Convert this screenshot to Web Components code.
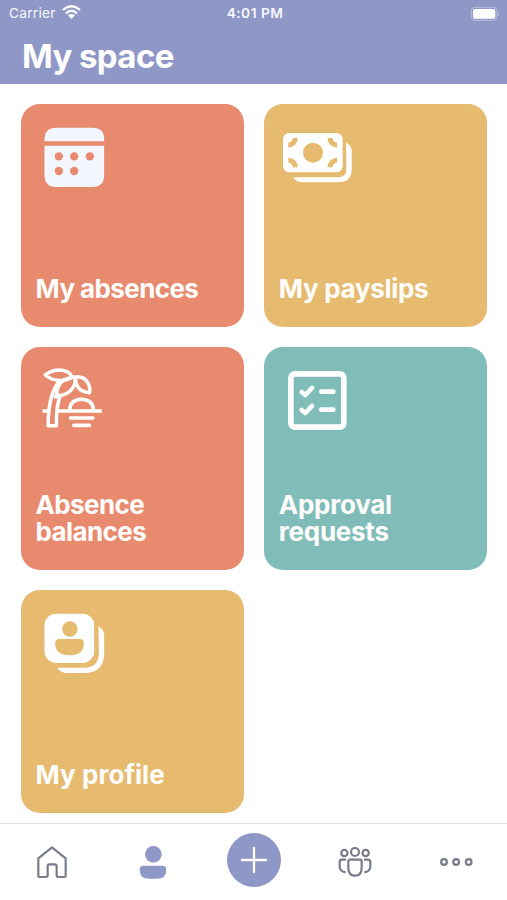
<!DOCTYPE html>
<html lang="en"><head><meta charset="utf-8"><title>My space</title>
<style>html,body{margin:0;height:100%;background:#fff}</style></head>
<body>
<my-space-app></my-space-app>
<script>
const ICONS = {
  calendar: ['47.5 36 225 210', '<g fill="#f3f6ff"><path d="M73 94V88Q73 53 108 53H217Q252 53 252 88V94Z"/><path d="M73 107H252V196Q252 231 217 231H108Q73 231 73 196Z"/></g><g fill="#e88a6d"><circle cx="116" cy="139" r="12.5"/><circle cx="162" cy="139" r="12.5"/><circle cx="209" cy="139" r="12.5"/><circle cx="116" cy="183" r="12.5"/><circle cx="162" cy="183" r="12.5"/></g>'],
  cash: ['45 35 225 210', '<path fill="#fff" d="M246 97Q263 104 263 123V176Q263 216 223 216H116Q96 216 88 201H223Q247 201 247 176Z"/><rect x="57" y="68" width="179" height="118" rx="19" fill="#fff"/><circle cx="147" cy="127" r="30" fill="#e6bb70"/><path d="M94 83A21 21 0 0 1 73 104M198 83A21 21 0 0 0 219 104M94 171A21 21 0 0 0 73 150M198 171A21 21 0 0 1 219 150" fill="none" stroke="#e6bb70" stroke-width="15"/>'],
  palm: ['46.5 45 225 210', '<g fill="none" stroke="#fff" stroke-width="10.500" stroke-linejoin="round"><path d="M74 75Q94 60 117 60Q147 61 155 82Q137 93 113 91Q91 89 74 75Z"/><path d="M155 82Q123 89 115 107Q107 121 109 137Q144 136 158 112Q168 97 162 82"/><path d="M155 82Q188 75 201 97Q210 110 207 128Q184 126 173 112Q163 99 165 84"/><path d="M116 94Q82 137 83 227H108Q106 174 119 136M100 140L114 140"/><path d="M66 183H90M108 183H244M147 181Q149 149 183 148Q218 149 219 181"/></g><path d="M150 204H217M160 226H207" stroke="#fff" stroke-width="11" stroke-linecap="round"/>'],
  checklist: ['45 45 225 210', '<g fill="none" stroke="#fff" stroke-linecap="round" stroke-linejoin="round"><rect x="80.500" y="71.500" width="159" height="160" rx="13" stroke-width="17"/><path stroke-width="14" d="M113 126L124 135L144 114M113 180L124 189L144 168"/><path stroke-width="14" d="M172 125H208M172 179H208"/></g>'],
  profile: ['47.5 36 225 210', '<path fill="#fff" d="M235 91Q252 99 252 122V171Q252 231 192 231H143Q121 231 111 215H192Q236 215 236 171Z"/><rect x="73" y="53" width="149" height="148" rx="35" fill="#fff"/><g fill="#e6bb70"><circle cx="149" cy="99" r="23"/><path d="M119 129H178Q191 129 191 142Q191 178 149 178Q105 178 105 142Q105 129 119 129Z"/></g>'],
  home: ['100 82 108 120', '<path fill="none" stroke="#777b89" stroke-width="6.500" stroke-linejoin="round" d="M154 98L195 131V183Q195 187 191 187H173Q168 187 168 182V155Q168 149 162 149H147Q141 149 141 155V182Q141 187 136 187H118Q113 187 113 183V131Z"/>'],
  person: ['404 82 108 120', '<g fill="#8f97c6"><circle cx="459" cy="119" r="25"/><path d="M430 153H487Q498 153 498 165Q498 192 469 192H447Q418 192 418 165Q418 153 430 153Z"/></g>'],
  team: ['249 82 108 120', '<g fill="none" stroke="#777b89" stroke-width="6.500"><circle cx="303" cy="112" r="12"/><circle cx="271" cy="115" r="9.500"/><circle cx="335" cy="115" r="9.500"/><path d="M288 135H318Q323 135 323 140V161Q322 183 303 183Q284 183 283 161V140Q283 135 288 135Z"/><path d="M276 135H264Q257 135 257 142V155Q257 171 275 173M330 135H341Q349 135 349 142V155Q349 171 331 173"/></g>'],
  more: ['553 82 108 120', '<g fill="none" stroke="#777b89" stroke-width="6.500"><circle cx="571" cy="142" r="8.500"/><circle cx="607.500" cy="142" r="8.500"/><circle cx="645" cy="142" r="8.500"/></g>']
};
function define(name, html) {
  const t = document.createElement('template');
  t.innerHTML = html;
  customElements.define(name, class extends HTMLElement {
    constructor() { super(); this.attachShadow({mode: 'open'}).append(t.content.cloneNode(true)); }
  });
}
customElements.define('app-icon', class extends HTMLElement {
  connectedCallback() {
    if (this.shadowRoot) return;
    const [box, body] = ICONS[this.getAttribute('name')];
    const size = box.split(' ').slice(2).map(n => n / 3);
    this.attachShadow({mode: 'open'}).innerHTML = `<style>:host{display:block;flex:none}svg{display:block}</style><svg width="${size[0]}" height="${size[1]}" viewBox="${box}">${body}</svg>`;
  }
});
define('status-bar', `<style>
  :host{display:grid;grid-template-columns:1fr auto 1fr;align-items:center;height:27px;padding:0 6px 0 9px;color:#f7f8ff;font:500 13.500px/27px Inter,sans-serif}
  .left{display:flex;align-items:center;gap:6px;font-weight:400;font-size:13.700px;letter-spacing:.25px}
  .left svg{margin-bottom:2px}
  .time{font-weight:600;font-size:13.700px;letter-spacing:.5px}
  .bat{justify-self:end}svg{display:block}</style>
  <div class="left"><span>Carrier</span><svg width="19" height="15" viewBox="0 0 57 45"><g fill="none" stroke="#fff" stroke-width="7"><path d="M3 15Q28 -8 54 15"/><path d="M12 25Q28 10 45 25"/></g><path fill="#fff" d="M18 31Q28 23 39 31L28.500 42Z"/></svg></div>
  <span class="time">4:01 PM</span>
  <svg class="bat" width="31" height="16" viewBox="0 0 93 48"><rect x="4" y="4" width="77" height="39" rx="11" fill="none" stroke="#babfe0" stroke-width="3"/><rect x="9" y="9" width="67" height="29" rx="6" fill="#fff"/><path d="M84 18Q91 23 84 29Z" fill="#babfe0"/></svg>`);
define('page-header', `<style>:host{display:block;height:83.500px;background:#8f97c6;flex:none;overflow:hidden}
  h1{margin:9px 0 0 22px;color:#fff;font:700 33px/40px Inter,sans-serif;letter-spacing:-.6px}</style><status-bar></status-bar><h1><slot></slot></h1>`);
define('space-card', `<style>:host{display:flex;flex-direction:column;justify-content:space-between;box-sizing:border-box;height:223.300px;border-radius:19px;padding:18px 15px 25px;background:var(--tone);color:#fffdfb;font:650 26px/27px Inter,sans-serif;letter-spacing:var(--track,0)}
  .label{display:block}</style><slot name="icon"></slot><span class="label"><slot></slot></span>`);
define('card-grid', `<style>:host{display:grid;grid-template-columns:223.500px 223.500px;gap:19.800px;padding:20px 0 0 20.500px;flex:1;align-content:start}</style><slot></slot>`);
define('add-button', `<style>:host{display:block;width:54px;height:54px;border-radius:50%;background:#8f97c6}svg{display:block}</style><svg width="54" height="54"><path d="M15 27H39M27 15V39" stroke="#fff" stroke-width="2.300" stroke-linecap="round"/></svg>`);
define('tab-bar', `<style>:host{display:grid;grid-template-columns:repeat(5,1fr);justify-items:center;align-items:center;height:77px;box-sizing:border-box;border-top:1px solid #dedfe2;flex:none;background:#fff;padding-left:1px}
  ::slotted(add-button){margin-bottom:4px}</style><slot></slot>`);
define('my-space-app', `<style>:host{display:flex;flex-direction:column;width:507px;height:900px;background:#fff;overflow:hidden}
  .coral{--tone:#e88a6d;--track:-.6px}.gold{--tone:#e6bb70;--track:-.3px}.teal{--tone:#80bdb9;--track:-.25px}.profile{--track:.05px}</style>
  <page-header>My space</page-header>
  <card-grid>
    <space-card class="coral"><app-icon slot="icon" name="calendar"></app-icon>My absences</space-card>
    <space-card class="gold"><app-icon slot="icon" name="cash"></app-icon>My payslips</space-card>
    <space-card class="coral"><app-icon slot="icon" name="palm"></app-icon>Absence<br>balances</space-card>
    <space-card class="teal"><app-icon slot="icon" name="checklist"></app-icon>Approval<br>requests</space-card>
    <space-card class="gold profile"><app-icon slot="icon" name="profile"></app-icon>My profile</space-card>
  </card-grid>
  <tab-bar><app-icon name="home"></app-icon><app-icon name="person"></app-icon><add-button></add-button><app-icon name="team"></app-icon><app-icon name="more"></app-icon></tab-bar>`);
</script>
</body></html>
